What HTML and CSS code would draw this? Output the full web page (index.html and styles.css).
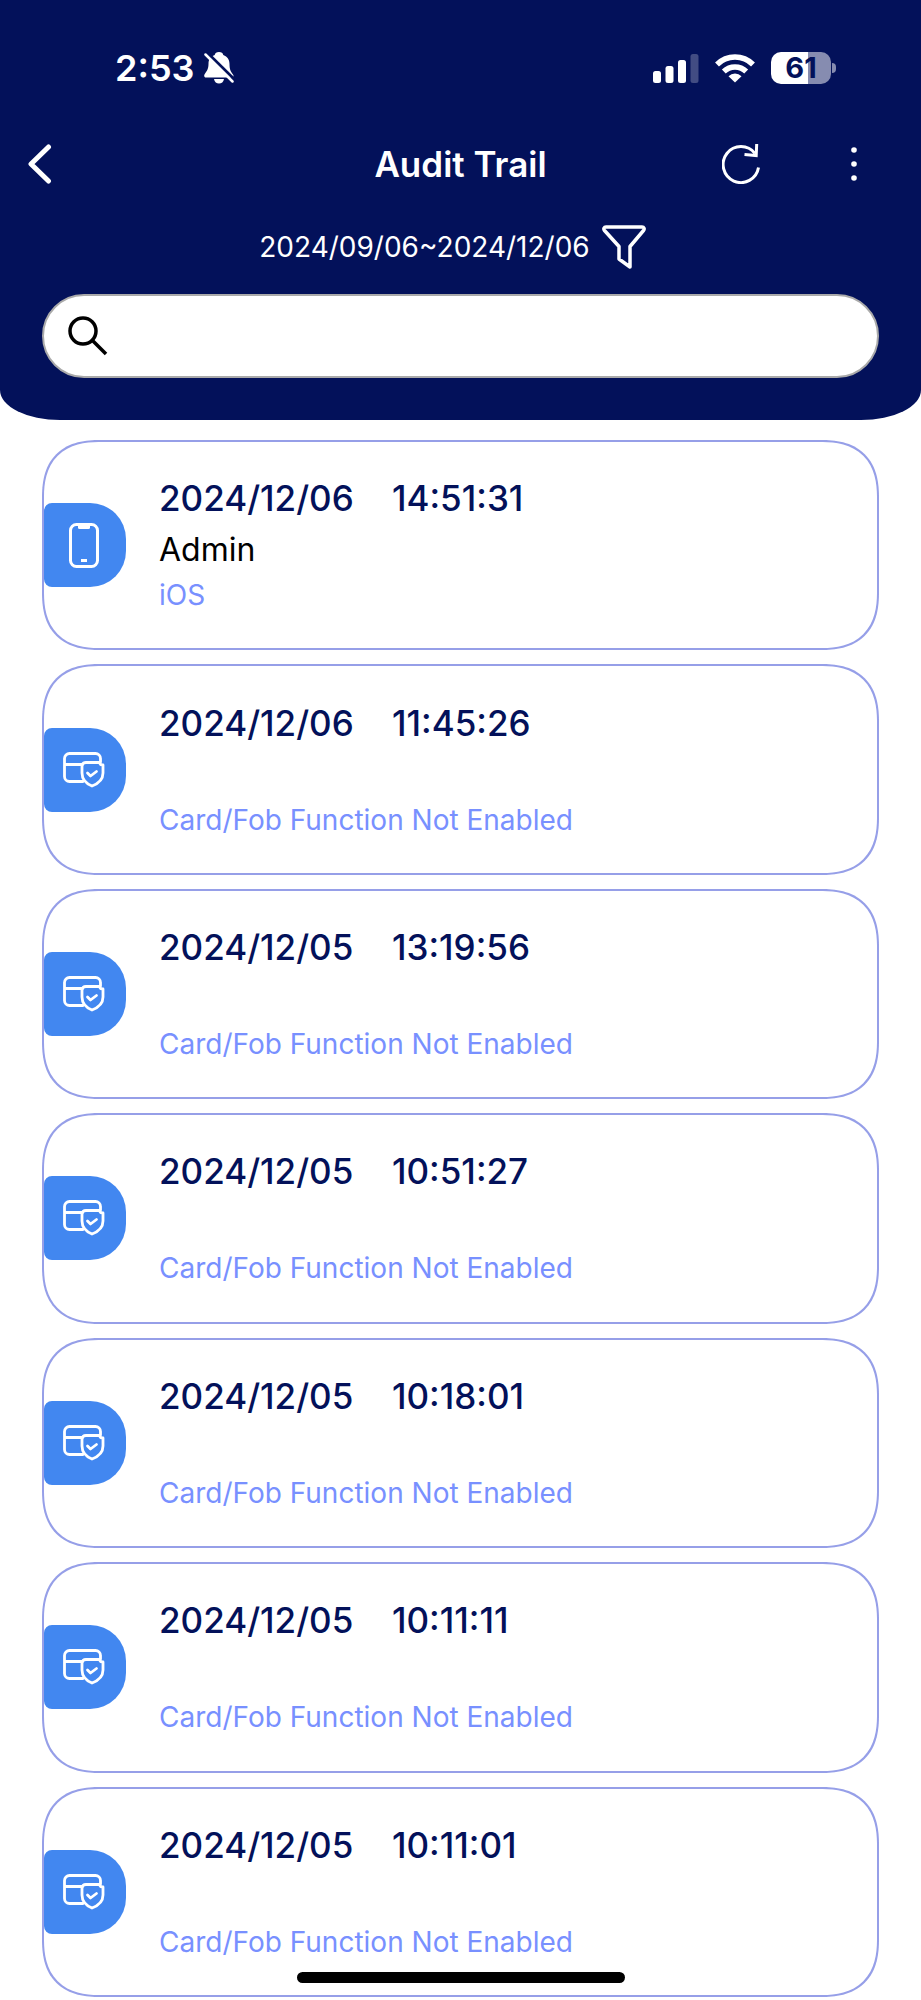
FILE: index.html
```
<!DOCTYPE html>
<html lang="en">
<head>
    <meta charset="UTF-8">
    <meta name="viewport" content="width=device-width, initial-scale=1.0">
    <title>Audit Trail</title>
    <link rel="stylesheet" href="styles.css">
</head>
<body>
    <!-- shared icons -->
    <svg class="icon-defs" aria-hidden="true">
        <symbol id="icon-phone" viewBox="0 0 30 45">
            <rect x="1.5" y="1.5" width="27" height="42" rx="6" fill="none" stroke="#fff" stroke-width="3"/>
            <path d="M9 2h12v2.500a1.500 1.500 0 0 1-1.500 1.500h-9a1.500 1.500 0 0 1-1.500-1.500z" fill="#fff"/>
            <rect x="12" y="36" width="6" height="3" fill="#fff"/>
        </symbol>
        <symbol id="icon-card" viewBox="0 0 42 36">
            <g fill="none" stroke="#fff" stroke-width="2.800" stroke-linecap="round" stroke-linejoin="round">
                <path d="M20 29.500H6.500a5 5 0 0 1-5-5V6.500a5 5 0 0 1 5-5h26a5 5 0 0 1 5 5V10M1.500 12.500H19"/>
                <path d="M23 10.500h13.500a3.500 3.500 0 0 0 3.500 2.500v8c0 6-4.500 10.500-11 13-6-2.500-10-7-10-13v-7a4 4 0 0 1 4-3.500z"/>
                <path d="M24.500 21l3 3 6-4.500"/>
            </g>
        </symbol>
    </svg>

    <header class="header">
        <div class="status-bar">
            <div class="status-left">
                <span class="clock">2:53</span>
                <svg width="30" height="32" viewBox="0 0 30 32" aria-hidden="true">
                    <path d="M15 0c-2.500 0-4 1.300-4.300 3C6 4.500 4.500 8 4.500 12c0 6-2.500 7.500-4 10.500-.8 1.500 0 3 1.500 3h26c1.500 0 2-1.500 1-3-2-3-3.500-4.500-3.500-10.500 0-4-2-7.500-6.200-9C19 1.300 17.500 0 15 0zM10 27h10c-.5 3-2.500 4.500-5 4.500S10.500 30 10 27z" fill="#fff"/>
                    <path d="M3 .5L30 27" stroke="#03115a" stroke-width="3"/>
                    <path d="M1.500 2.500L28.500 29.500" stroke="#fff" stroke-width="2.500" stroke-linecap="round"/>
                </svg>
            </div>
            <div class="status-right">
                <svg width="46" height="30" viewBox="0 0 46 30" aria-hidden="true">
                    <g fill="#fff">
                        <rect x="0" y="18" width="8" height="12" rx="2.500"/>
                        <rect x="12.500" y="13" width="8" height="17" rx="2.500"/>
                        <rect x="25" y="7" width="8" height="23" rx="2.500"/>
                        <rect x="37.500" y="1" width="8" height="29" rx="2.500" opacity=".25"/>
                    </g>
                </svg>
                <svg width="40" height="30" viewBox="0 0 40 30" aria-hidden="true">
                    <g fill="none" stroke="#fff" stroke-width="5.500">
                        <path d="M2 11.500a25.500 25.500 0 0 1 36 0"/>
                        <path d="M8.800 18.500a16 16 0 0 1 22.400 0"/>
                    </g>
                    <path d="M20 29.500l-6.500-6.300a9.300 9.300 0 0 1 13 0z" fill="#fff"/>
                </svg>
                <span class="battery">61</span>
            </div>
        </div>

        <nav class="nav">
            <button class="icon-btn back-btn" aria-label="Back">
                <svg width="24" height="40" viewBox="0 0 24 40">
                    <path d="M20.500 3L3 20l17.500 17" fill="none" stroke="#fff" stroke-width="5" stroke-linecap="round" stroke-linejoin="round"/>
                </svg>
            </button>
            <h1>Audit Trail</h1>
            <div class="nav-actions">
                <button class="icon-btn" aria-label="Refresh">
                    <svg width="38" height="40" viewBox="0 0 38 40">
                        <g fill="none" stroke="#fff" stroke-width="3">
                            <path d="M36.500 23.500A17.800 18 0 1 1 33 9.500"/>
                            <path d="M34.700 0L34.200 11.500L22.500 10.500"/>
                        </g>
                    </svg>
                </button>
                <button class="icon-btn" aria-label="More">
                    <svg width="12" height="36" viewBox="0 0 12 36">
                        <g fill="#fff">
                            <circle cx="6" cy="4" r="2.800"/>
                            <circle cx="6" cy="18" r="2.800"/>
                            <circle cx="6" cy="32" r="2.800"/>
                        </g>
                    </svg>
                </button>
            </div>
        </nav>

        <div class="range">
            <span>2024/09/06~2024/12/06</span>
            <button class="icon-btn" aria-label="Filter">
                <svg width="44" height="44" viewBox="0 0 44 44">
                    <path d="M4 2h36c2 0 2.800 2 1.500 3.500L28 21.500V42L17 34V21.500L2.500 5.500C1.200 4 2 2 4 2z" fill="none" stroke="#fff" stroke-width="3.500" stroke-linejoin="round"/>
                </svg>
            </button>
        </div>

        <div class="search-box">
            <label for="search" aria-label="Search">
                <svg width="40" height="40" viewBox="0 0 40 40">
                    <g fill="none" stroke="#000" stroke-width="3.500">
                        <circle cx="15" cy="15" r="13"/>
                        <path d="M24.500 24.500L38 38"/>
                    </g>
                </svg>
            </label>
            <input type="text" id="search">
        </div>
    </header>

    <main class="log-list">
        <article class="log">
            <div class="badge"><svg width="30" height="45"><use href="#icon-phone"/></svg></div>
            <div class="log-text">
                <div class="when"><span>2024/12/06</span><span>14:51:31</span></div>
                <div class="who">Admin</div>
                <div class="what">iOS</div>
            </div>
        </article>
        <article class="log">
            <div class="badge"><svg width="42" height="36"><use href="#icon-card"/></svg></div>
            <div class="log-text">
                <div class="when"><span>2024/12/06</span><span>11:45:26</span></div>
                <div class="who"></div>
                <div class="what">Card/Fob Function Not Enabled</div>
            </div>
        </article>
        <article class="log">
            <div class="badge"><svg width="42" height="36"><use href="#icon-card"/></svg></div>
            <div class="log-text">
                <div class="when"><span>2024/12/05</span><span>13:19:56</span></div>
                <div class="who"></div>
                <div class="what">Card/Fob Function Not Enabled</div>
            </div>
        </article>
        <article class="log">
            <div class="badge"><svg width="42" height="36"><use href="#icon-card"/></svg></div>
            <div class="log-text">
                <div class="when"><span>2024/12/05</span><span>10:51:27</span></div>
                <div class="who"></div>
                <div class="what">Card/Fob Function Not Enabled</div>
            </div>
        </article>
        <article class="log">
            <div class="badge"><svg width="42" height="36"><use href="#icon-card"/></svg></div>
            <div class="log-text">
                <div class="when"><span>2024/12/05</span><span>10:18:01</span></div>
                <div class="who"></div>
                <div class="what">Card/Fob Function Not Enabled</div>
            </div>
        </article>
        <article class="log">
            <div class="badge"><svg width="42" height="36"><use href="#icon-card"/></svg></div>
            <div class="log-text">
                <div class="when"><span>2024/12/05</span><span>10:11:11</span></div>
                <div class="who"></div>
                <div class="what">Card/Fob Function Not Enabled</div>
            </div>
        </article>
        <article class="log">
            <div class="badge"><svg width="42" height="36"><use href="#icon-card"/></svg></div>
            <div class="log-text">
                <div class="when"><span>2024/12/05</span><span>10:11:01</span></div>
                <div class="who"></div>
                <div class="what">Card/Fob Function Not Enabled</div>
            </div>
        </article>
    </main>

    <div class="home-indicator"></div>
</body>
</html>
```

FILE: styles.css
```
* {
    box-sizing: border-box;
}
body {
    margin: 0;
    min-height: 100vh;
    display: flex;
    flex-direction: column;
    font-family: Inter, "Liberation Sans", sans-serif;
    background-color: #fff;
    color: #000;
}
svg {
    display: block;
}
.icon-defs {
    position: absolute;
    width: 0;
    height: 0;
}

/* header */
.header {
    background-color: #03115a;
    color: #fff;
    padding-bottom: 42px;
    border-radius: 0 0 60px 60px / 0 0 30px 30px;
}
.status-bar {
    height: 136px;
    padding: 0 84px 0 115px;
    display: flex;
    align-items: center;
    justify-content: space-between;
}
.status-left {
    display: flex;
    align-items: center;
    gap: 10px;
}
.clock {
    font-size: 36px;
    font-weight: 600;
}
.status-right {
    display: flex;
    align-items: center;
    gap: 16px;
}
.battery {
    position: relative;
    width: 60px;
    height: 32px;
    margin-right: 6px;
    border-radius: 10px;
    background: linear-gradient(to right, #fff 61%, #868cb0 61%);
    color: #03115a;
    font-size: 29px;
    font-weight: 700;
    line-height: 32px;
    text-align: center;
}
.battery::after {
    content: "";
    position: absolute;
    top: 11px;
    right: -5px;
    width: 4px;
    height: 10px;
    border-radius: 0 4px 4px 0;
    background-color: #868cb0;
}
.icon-btn {
    padding: 0;
    border: none;
    background: none;
    cursor: pointer;
}
.nav {
    height: 56px;
    padding: 0 61px 0 28px;
    display: flex;
    align-items: center;
    justify-content: space-between;
    position: relative;
}
.nav h1 {
    position: absolute;
    left: 0;
    right: 0;
    margin: 0;
    font-size: 35px;
    font-weight: 600;
    line-height: 56px;
    text-align: center;
    pointer-events: none;
}
.nav-actions {
    display: flex;
    align-items: center;
    gap: 88px;
}
.range {
    height: 56px;
    margin: 27px 0 19px;
    padding-right: 16px;
    display: flex;
    align-items: center;
    justify-content: center;
    gap: 12px;
    font-size: 28px;
}
.search-box {
    height: 84px;
    margin: 0 42px;
    padding: 0 40px 0 24px;
    display: flex;
    align-items: center;
    gap: 16px;
    background-color: #fff;
    border: 2px solid #aaa;
    border-radius: 42px;
}
.search-box input {
    flex: 1;
    min-width: 0;
    height: 60px;
    border: none;
    outline: none;
    background: none;
    font: inherit;
    font-size: 28px;
}

/* log entries */
.log-list {
    flex: 1;
    padding: 20px 42px 3px;
    display: grid;
    grid-auto-rows: 1fr;
    gap: 14px;
}
.log {
    min-height: 208px;
    display: flex;
    align-items: center;
    gap: 33px;
    border: 2px solid #969fe8;
    border-radius: 46px;
}
@supports (corner-shape: squircle) {
    .log {
        border-radius: 58px;
        corner-shape: superellipse(1.3);
    }
}
.badge {
    flex: none;
    width: 82px;
    height: 84px;
    padding-right: 2px;
    display: flex;
    align-items: center;
    justify-content: center;
    background-color: #4287f0;
    border-radius: 8px 36px 36px 8px;
}
.log-text {
    padding-bottom: 4px;
}
.when {
    display: grid;
    grid-template-columns: 233px auto;
    color: #03115a;
    font-size: 35px;
    font-weight: 500;
    line-height: 52px;
}
.who {
    height: 52px;
    font-size: 32px;
    line-height: 52px;
}
.what {
    color: #7890ff;
    font-size: 28px;
    line-height: 38px;
}

.home-indicator {
    position: fixed;
    left: 50%;
    bottom: 17px;
    width: 328px;
    height: 11px;
    margin-left: -164px;
    border-radius: 6px;
    background-color: #000;
}
```
